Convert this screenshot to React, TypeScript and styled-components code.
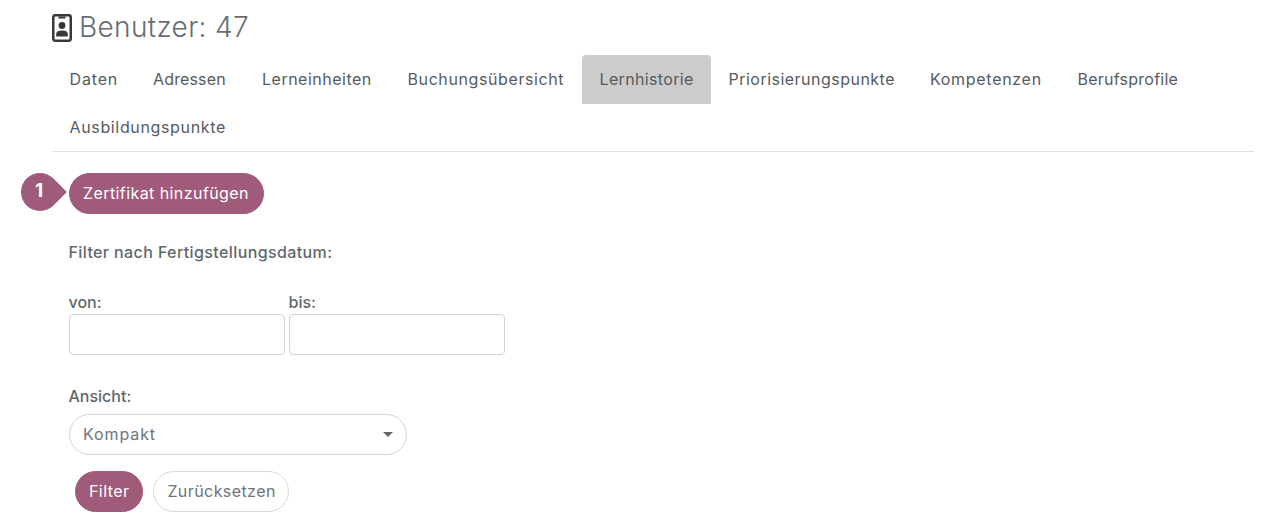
import React from 'react';
import styled, { createGlobalStyle } from 'styled-components';

const GlobalStyle = createGlobalStyle`
  html, body {
    margin: 0;
    background: #fff;
    color: #5f676c;
    font-family: Inter, "Noto Sans", "Liberation Sans", sans-serif;
    font-size: 16px;
  }
`;

const Page = styled.div`
  width: 1265px;
  height: 532px;
  overflow: hidden;
  box-sizing: border-box;
  padding: 10px 11px 0 52px;
`;

const Title = styled.h1`
  display: flex;
  align-items: center;
  gap: 7px;
  height: 35px;
  margin: 0 0 10px;
  font-size: 28px;
  font-weight: 300;
  line-height: 35px;
  letter-spacing: 0.35px;
  color: #666e73;
`;

const Tabs = styled.nav`
  display: flex;
  flex-wrap: wrap;
  border-bottom: 1px solid #dee2e6;
`;

const Tab = styled.a<{ $active?: boolean; $w: number; $track: number }>`
  box-sizing: border-box;
  display: block;
  width: ${p => p.$w}px;
  height: ${p => (p.$active ? 49 : 48)}px;
  margin-bottom: ${p => (p.$active ? -1 : 0)}px;
  padding: 14px 0 0 17.5px;
  border-radius: 4px 4px 0 0;
  background: ${p => (p.$active ? '#cccccc' : 'transparent')};
  color: #555b5f;
  font-size: 16px;
  line-height: 20px;
  letter-spacing: ${p => p.$track}px;
  white-space: nowrap;
`;

const Content = styled.div`
  padding: 21px 0 0 17px;
`;

const AddRow = styled.div`
  position: relative;
  height: 41px;
`;

const Marker = styled.div`
  position: absolute;
  left: -49px;
  top: 0;
  width: 40px;
  height: 40px;
`;

const MarkerShape = styled.div`
  position: absolute;
  left: 1px;
  top: 0;
  width: 38px;
  height: 38px;
  background: #a05a7a;
  border-radius: 50% 0 50% 50%;
  transform: rotate(45deg);
`;

const MarkerText = styled.span`
  position: absolute;
  left: 0;
  top: 7px;
  width: 38px;
  text-align: center;
  color: #fff;
  font-size: 19px;
  font-weight: 700;
  line-height: 22px;
`;

const Pill = styled.button<{ $outline?: boolean }>`
  box-sizing: border-box;
  height: 41px;
  padding: 0 ${p => (p.$outline ? 12.5 : 13)}px 2px 13px;
  border: 1px solid ${p => (p.$outline ? '#d9d9d9' : '#a05a7a')};
  border-radius: 20.5px;
  background: ${p => (p.$outline ? '#fff' : '#a05a7a')};
  color: ${p => (p.$outline ? '#6c757d' : '#fff')};
  font-family: inherit;
  font-size: 16px;
  letter-spacing: 0.42px;
  white-space: nowrap;
`;

const AddPill = styled(Pill)`
  padding-right: 14px;
`;

const Heading = styled.div`
  margin-top: 28px;
  margin-left: -0.5px;
  height: 20px;
  font-size: 16px;
  font-weight: 500;
  line-height: 20px;
  letter-spacing: 0.39px;
`;

const DateRow = styled.div`
  display: flex;
  gap: 4px;
  margin-top: 30px;
`;

const Field = styled.div`
  width: 216px;
`;

const Label = styled.label<{ $h: number }>`
  display: block;
  height: ${p => p.$h}px;
  margin-left: -0.5px;
  font-size: 16px;
  font-weight: 500;
  line-height: 20px;
  color: #5f676c;
`;

const DateInput = styled.div`
  box-sizing: border-box;
  height: 41px;
  border: 1px solid #ced4da;
  border-radius: 4px;
  background: #fff;
`;

const ViewBlock = styled.div`
  margin-top: 31px;
  width: 337.5px;
`;

const SelectBox = styled.div`
  box-sizing: border-box;
  display: flex;
  align-items: center;
  justify-content: space-between;
  height: 41px;
  padding: 0 14px 2px 13px;
  border: 1px solid #ced4da;
  border-radius: 20.5px;
  color: #6c757d;
  letter-spacing: 0.9px;
`;

const Caret = styled.span`
  width: 0;
  height: 0;
  margin: 2px -1px 0 0;
  border-left: 5px solid transparent;
  border-right: 5px solid transparent;
  border-top: 5px solid #5f676c;
`;

const Actions = styled.div`
  display: flex;
  gap: 10px;
  margin: 16px 0 0 6px;
`;

const before: [string, number, number][] = [
  ['Daten', 83.5, 0.85],
  ['Adressen', 109, 0.15],
  ['Lerneinheiten', 145.5, 0.5],
  ['Buchungsübersicht', 192, 0.6],
];

const after: [string, number, number][] = [
  ['Priorisierungspunkte', 201.5, 0.48],
  ['Kompetenzen', 147.5, 0.7],
  ['Berufsprofile', 136, 0.25],
  ['Ausbildungspunkte', 192, 0.65],
];

const App: React.FC = () => {
  return (
    <Page>
      <GlobalStyle />
      <Title>
        <svg width="20" height="28" viewBox="0 0 20 28" aria-hidden="true">
          <rect x="1.25" y="1.25" width="17.5" height="25.5" rx="2.2" fill="none" stroke="#34383b" strokeWidth="2.5" />
          <rect x="6.5" y="2.5" width="7" height="2" fill="#34383b" />
          <circle cx="10" cy="11.5" r="3.4" fill="#34383b" />
          <path d="M4.2 22.5v-2.6c0-2.2 2.1-3.4 5.8-3.4s5.8 1.2 5.8 3.4v2.6z" fill="#34383b" />
        </svg>
        Benutzer: 47
      </Title>
      <Tabs>
        {before.map(([t, w, k]) => (
          <Tab key={t} $w={w} $track={k}>{t}</Tab>
        ))}
        <Tab $active $w={129} $track={0.35}>Lernhistorie</Tab>
        {after.map(([t, w, k]) => (
          <Tab key={t} $w={w} $track={k}>{t}</Tab>
        ))}
      </Tabs>
      <Content>
        <AddRow>
          <Marker>
            <MarkerShape />
            <MarkerText>1</MarkerText>
          </Marker>
          <AddPill>Zertifikat hinzufügen</AddPill>
        </AddRow>
        <Heading>Filter nach Fertigstellungsdatum:</Heading>
        <DateRow>
          <Field>
            <Label $h={22}>von:</Label>
            <DateInput />
          </Field>
          <Field>
            <Label $h={22}>bis:</Label>
            <DateInput />
          </Field>
        </DateRow>
        <ViewBlock>
          <Label $h={28}>Ansicht:</Label>
          <SelectBox>
            Kompakt
            <Caret />
          </SelectBox>
        </ViewBlock>
        <Actions>
          <Pill>Filter</Pill>
          <Pill $outline>Zurücksetzen</Pill>
        </Actions>
      </Content>
    </Page>
  );
};

export default App;
